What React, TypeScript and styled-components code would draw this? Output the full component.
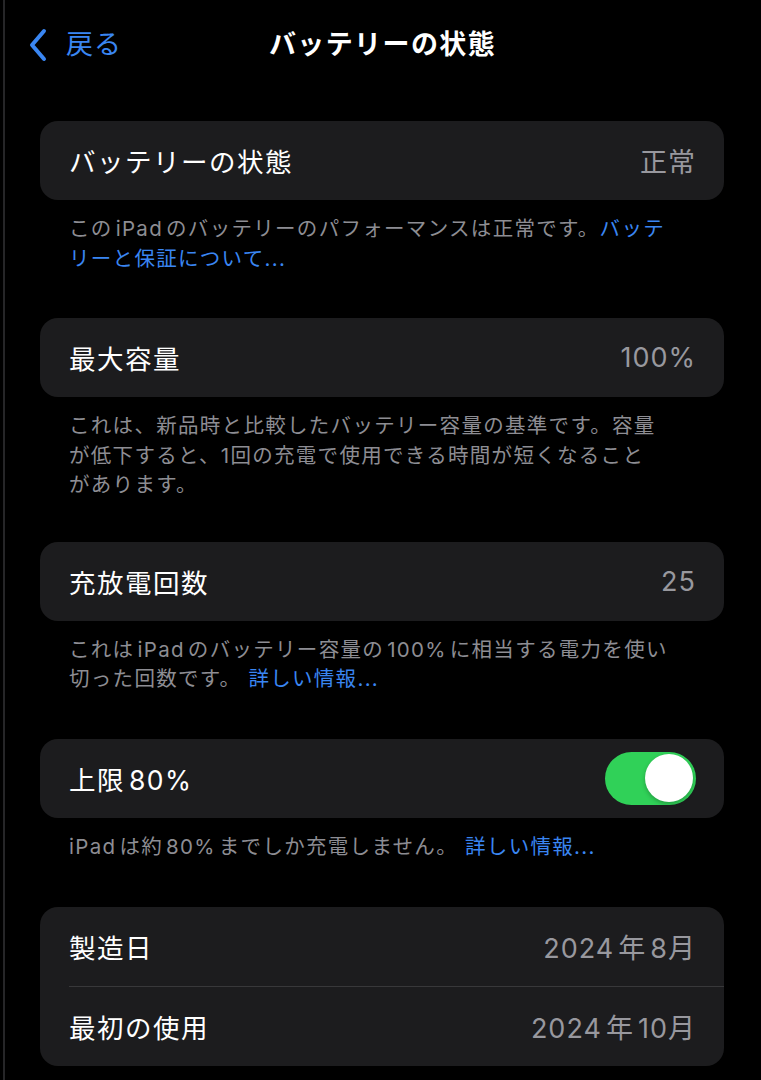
import React from "react";
import styled, { createGlobalStyle } from "styled-components";

const Global = createGlobalStyle`
  html, body { margin: 0; padding: 0; background: #000; }
  body {
    font-family: Inter, "Noto Sans CJK JP", "Noto Sans", sans-serif;
    color: #fff;
    -webkit-font-smoothing: antialiased;
  }
`;

const Frame = styled.div`
  display: flex;
  width: 761px;
  min-height: 1080px;
  background: #000;
`;

const SplitLine = styled.div`
  width: 2px;
  margin-left: 3px;
  background: #262628;
  flex: none;
`;

const Content = styled.div`
  flex: 1;
  display: flex;
  flex-direction: column;
  padding: 0 37px 0 35px;
`;

const NavBar = styled.header`
  position: relative;
  height: 90px;
  display: flex;
  align-items: flex-start;
  justify-content: center;
  padding-top: 25px;
  box-sizing: border-box;
  margin: 0 -37px 0 -35px;
`;

const BackButton = styled.div`
  position: absolute;
  left: 23px;
  top: 26px;
  display: flex;
  align-items: center;
  gap: 18px;
  color: #3a86f2;
  font-size: 27px;
  line-height: 38px;
  letter-spacing: 1px;
`;

const Title = styled.h1`
  margin: 0;
  font-size: 27px;
  font-weight: 700;
  line-height: 40px;
  letter-spacing: 1.4px;
  margin-right: 1px;
`;

const Card = styled.div<{ $mt: number }>`
  background: #1c1c1e;
  border-radius: 18px;
  display: flex;
  flex-direction: column;
  margin-top: ${(p) => p.$mt}px;
`;

const Row = styled.div`
  height: 79px;
  display: flex;
  align-items: center;
  justify-content: space-between;
  padding: 0 29px 0 29px;
`;

const Divider = styled.div`
  height: 1px;
  background: #38383a;
  margin-left: 29px;
`;

const Label = styled.span`
  font-size: 26.5px;
  letter-spacing: 1.5px;
  color: #fff;
`;

const Value = styled.span`
  font-size: 27px;
  letter-spacing: 1px;
  margin-right: -1px;
  color: #98989e;
`;

const Latin = styled.span`
  margin: 0 0.15em;
`;

const Footer = styled.p`
  margin: 14px 0 0;
  padding-left: 29px;
  font-size: 20.5px;
  line-height: 29.5px;
  letter-spacing: 1.3px;
  color: #8d8d93;
  white-space: nowrap;
`;

const Link = styled.span`
  color: #3a86f2;
`;

const Track = styled.div`
  width: 91px;
  height: 53px;
  border-radius: 27px;
  background: #30d158;
  display: flex;
  align-items: center;
  justify-content: flex-end;
  padding: 0 3px;
  box-sizing: border-box;
  margin-right: -1px;
`;

const Knob = styled.div`
  width: 48px;
  height: 48px;
  border-radius: 50%;
  background: #fff;
  box-shadow: 0 2px 4px rgba(0, 0, 0, 0.25);
`;

const Chevron = () => (
  <svg width="20" height="34" viewBox="0 0 20 34" fill="none">
    <path d="M16 3 L4 17 L16 31" stroke="#3a86f2" strokeWidth="4" strokeLinecap="round" strokeLinejoin="round" />
  </svg>
);

export default function App() {
  return (
    <>
      <Global />
      <Frame>
        <SplitLine />
        <Content>
          <NavBar>
            <BackButton>
              <Chevron />
              <span>戻る</span>
            </BackButton>
            <Title>バッテリーの状態</Title>
          </NavBar>

          <Card $mt={31}>
            <Row>
              <Label>バッテリーの状態</Label>
              <Value>正常</Value>
            </Row>
          </Card>
          <Footer>
            この<Latin>iPad</Latin>のバッテリーのパフォーマンスは正常です。<Link>バッテ<br />リーと保証について...</Link>
          </Footer>

          <Card $mt={45}>
            <Row>
              <Label>最大容量</Label>
              <Value>100%</Value>
            </Row>
          </Card>
          <Footer>
            これは、新品時と比較したバッテリー容量の基準です。容量<br />
            が低下すると、1回の充電で使用できる時間が短くなること<br />
            があります。
          </Footer>

          <Card $mt={42}>
            <Row>
              <Label>充放電回数</Label>
              <Value>25</Value>
            </Row>
          </Card>
          <Footer>
            これは<Latin>iPad</Latin>のバッテリー容量の<Latin>100%</Latin>に相当する電力を使い<br />
            切った回数です。 <Link>詳しい情報...</Link>
          </Footer>

          <Card $mt={45}>
            <Row>
              <Label>上限<Latin>80%</Latin></Label>
              <Track>
                <Knob />
              </Track>
            </Row>
          </Card>
          <Footer>
            <Latin style={{ marginLeft: 0 }}>iPad</Latin>は約<Latin>80%</Latin>までしか充電しません。 <Link>詳しい情報...</Link>
          </Footer>

          <Card $mt={46}>
            <Row>
              <Label>製造日</Label>
              <Value>2024<Latin>年</Latin>8月</Value>
            </Row>
            <Divider />
            <Row>
              <Label>最初の使用</Label>
              <Value>2024<Latin>年</Latin>10月</Value>
            </Row>
          </Card>
        </Content>
      </Frame>
    </>
  );
}
